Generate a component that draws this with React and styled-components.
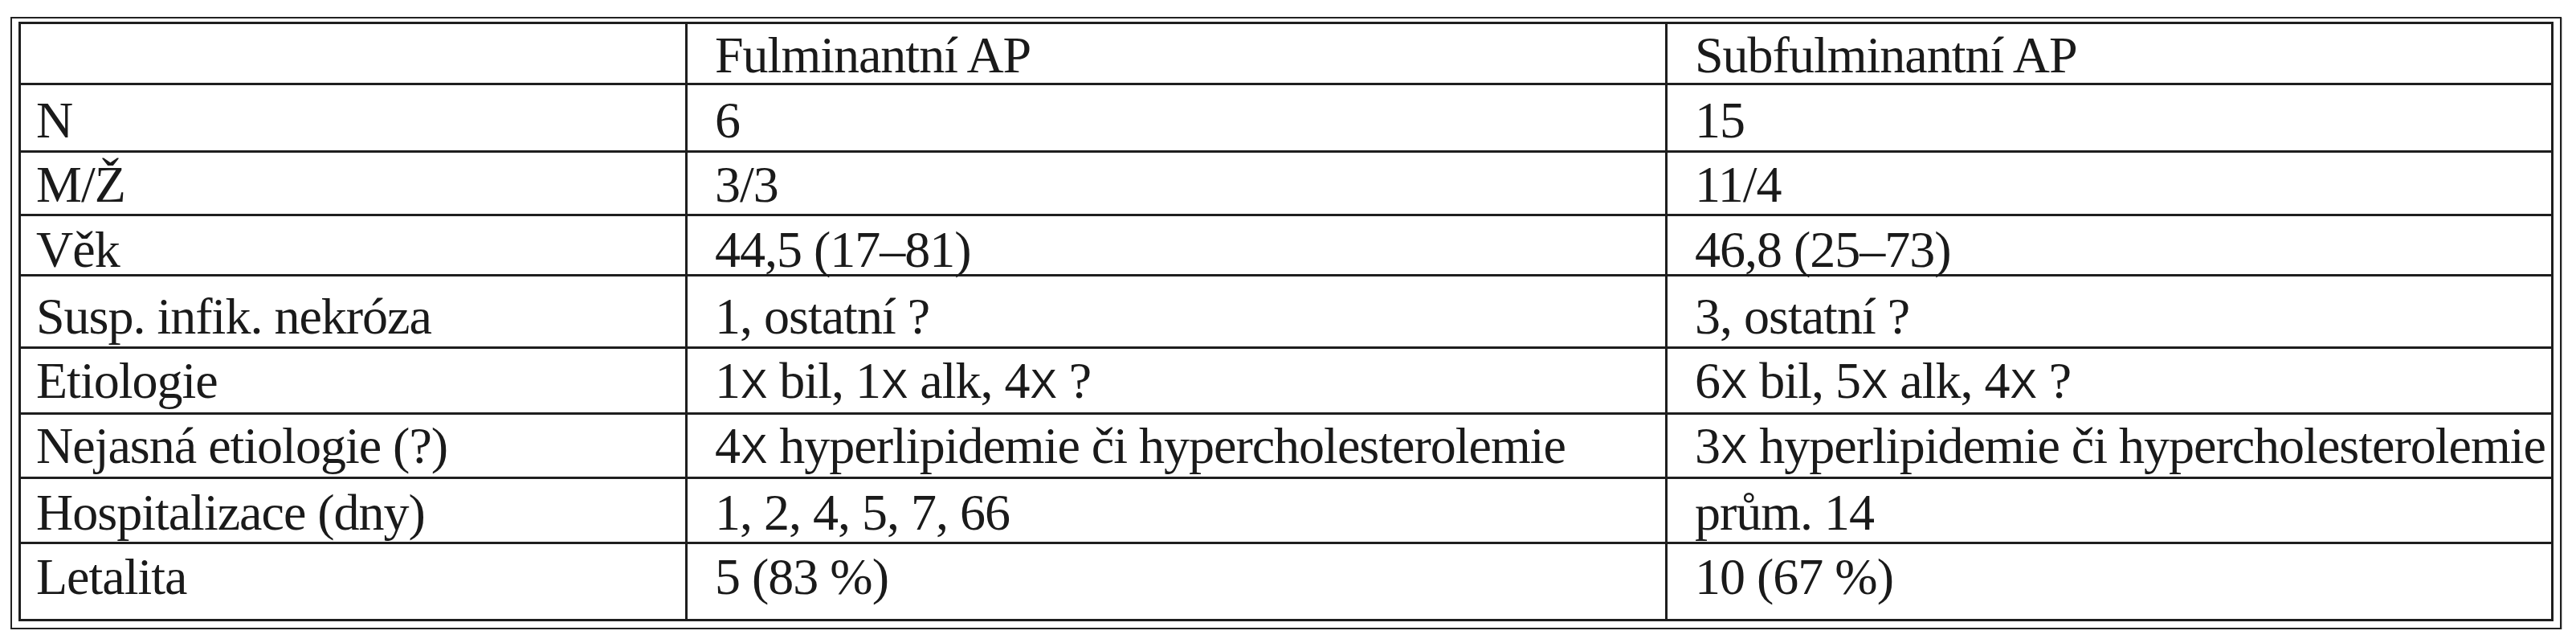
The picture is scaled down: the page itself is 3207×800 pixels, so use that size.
import React from 'react';
import styled, { createGlobalStyle } from 'styled-components';

const GlobalStyle = createGlobalStyle`
  html, body {
    margin: 0;
    padding: 0;
    background: #fff;
  }
`;

const rows = [
  { label: '', a: 'Fulminantní AP', b: 'Subfulminantní AP', h: 76, pad: 11 },
  { label: 'N', a: '6', b: '15', h: 84, pad: 16 },
  { label: 'M/Ž', a: '3/3', b: '11/4', h: 79, pad: 12 },
  { label: 'Věk', a: '44,5 (17–81)', b: '46,8 (25–73)', h: 75, pad: 14 },
  { label: 'Susp. infik. nekróza', a: '1, ostatní ?', b: '3, ostatní ?', h: 90, pad: 22 },
  { label: 'Etiologie', a: ['1', 'X', ' bil, 1', 'X', ' alk, 4', 'X', ' ?'], b: ['6', 'X', ' bil, 5', 'X', ' alk, 4', 'X', ' ?'], h: 82, pad: 12 },
  {
    label: 'Nejasná etiologie (?)',
    a: ['4', 'X', ' hyperlipidemie či hypercholesterolemie'],
    b: ['3', 'X', ' hyperlipidemie či hypercholesterolemie'],
    h: 80,
    pad: 11,
  },
  { label: 'Hospitalizace (dny)', a: '1, 2, 4, 5, 7, 66', b: 'prům. 14', h: 81, pad: 14 },
  { label: 'Letalita', a: '5 (83 %)', b: '10 (67 %)', h: 96, pad: 13 },
];

export default function App() {
  return (
    <>
      <GlobalStyle />
      <Frame>
        <Table>
          {rows.map((r, i) => (
            <Row key={i} $h={r.h}>
              <Cell $first $pad={r.pad}>{r.label}</Cell>
              <Cell $pad={r.pad}><Text value={r.a} /></Cell>
              <Cell $pad={r.pad}><Text value={r.b} /></Cell>
            </Row>
          ))}
        </Table>
      </Frame>
    </>
  );
}

// the "x" in counts is set in a sans face in the original
function Text({ value }) {
  if (typeof value === 'string') return value;
  return value.map((part, i) =>
    part === 'X' ? <Times key={i}>X</Times> : <React.Fragment key={i}>{part}</React.Fragment>
  );
}

const Frame = styled.div`
  margin: 21px 0 0 13px;
  width: 3176px;
  box-sizing: border-box;
  border: 2px solid #222;
  padding: 4px 8px 8px 8px;
  box-shadow: 1px 1px 0 #bdbdbd;
`;

const Table = styled.div`
  border-top: 3px solid #1e1e1e;
  border-left: 3px solid #1e1e1e;
  font-family: 'Liberation Serif', 'Times New Roman', serif;
  font-size: 64px;
  letter-spacing: -1px;
  line-height: 56px;
  color: #1a1a1a;
`;

const Row = styled.div`
  display: grid;
  grid-template-columns: 830px 1220px 1fr;
  height: ${(p) => p.$h}px;
  box-sizing: border-box;
  border-bottom: 3px solid #1e1e1e;
`;

const Cell = styled.div`
  border-right: 3px solid #1e1e1e;
  padding: ${(p) => p.$pad}px 0 0 ${(p) => (p.$first ? 19 : 34)}px;
  white-space: nowrap;
`;

const Times = styled.span`
  font-family: 'Liberation Sans', Arial, sans-serif;
  font-size: 50px;
  letter-spacing: 0;
  margin-left: 1px;
`;
